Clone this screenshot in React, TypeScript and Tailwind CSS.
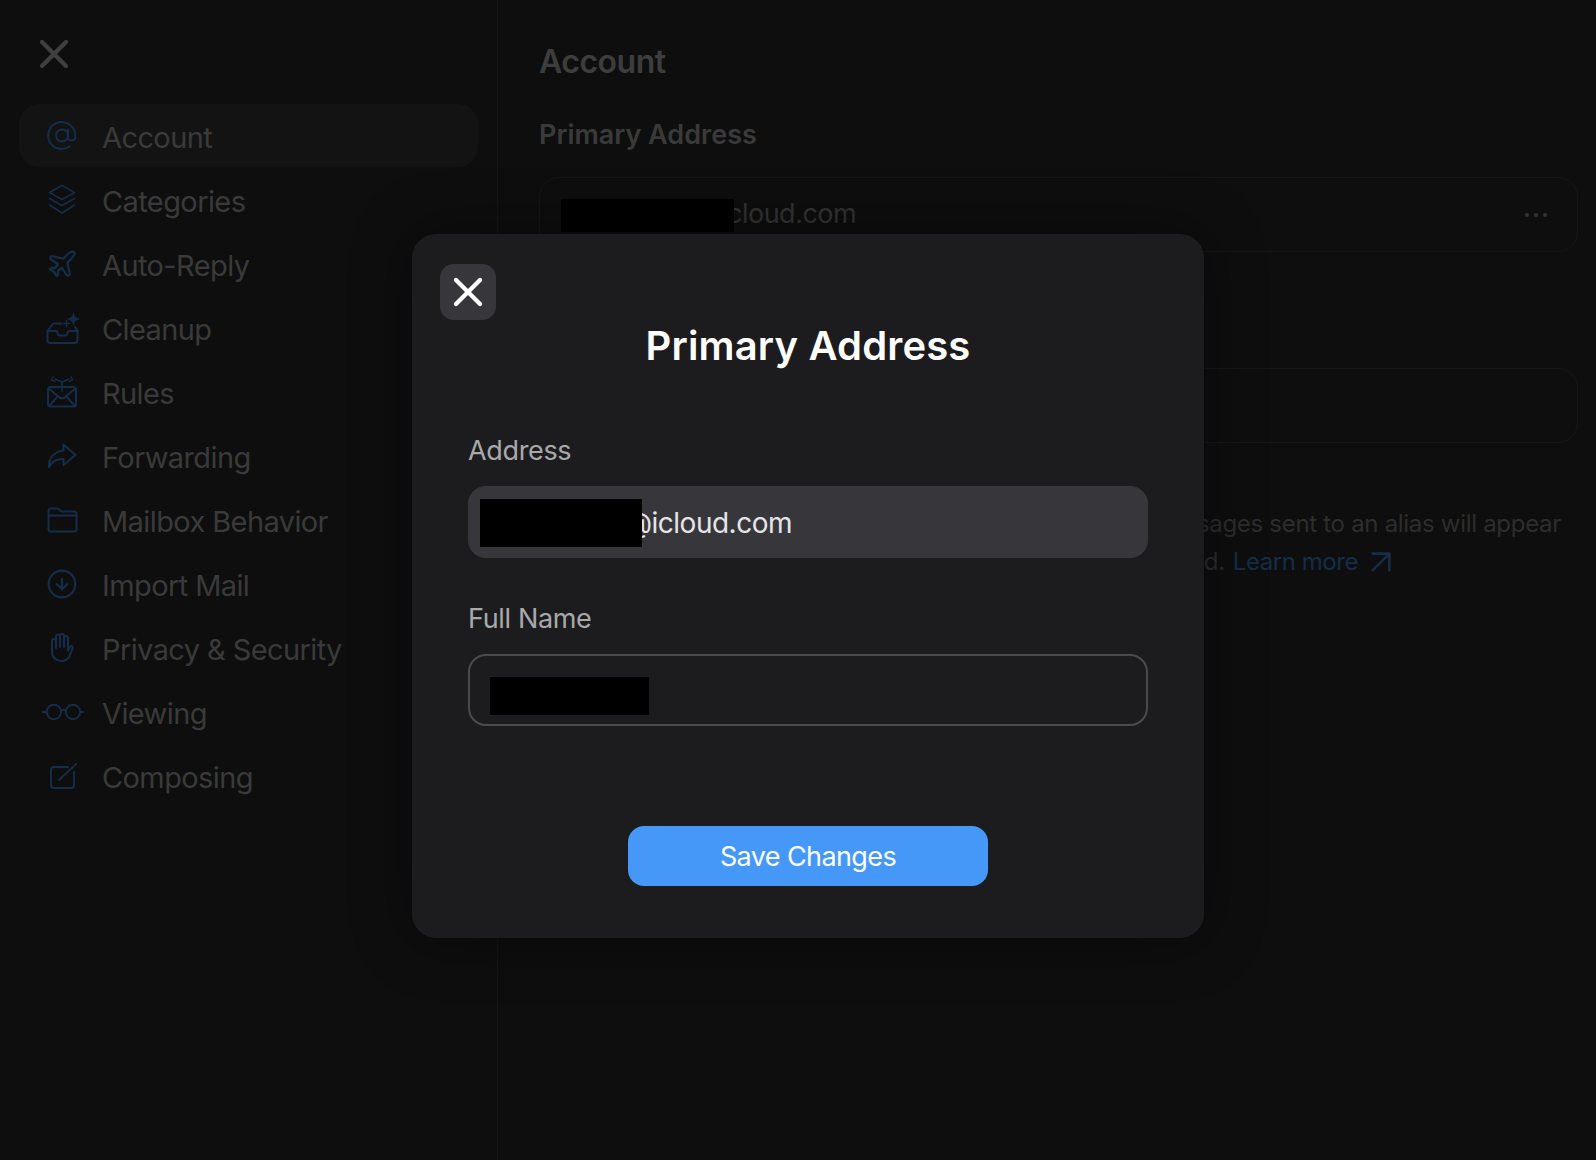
import React from 'react';
import { X, Plane, CircleArrowDown, ArrowUpRight } from 'lucide-react';

const iconProps = {
  fill: 'none',
  stroke: 'currentColor',
  strokeWidth: 2,
  strokeLinecap: 'round' as const,
  strokeLinejoin: 'round' as const,
};

const AtIcon = () => (
  <svg width="30" height="30" viewBox="0 0 30 30" {...iconProps}>
    <circle cx="15" cy="14.5" r="6" />
    <path d="M21 8.5v7.5a3.6 3.6 0 0 0 7.2 0v-1.5a13.5 13.5 0 1 0-5.6 11" />
  </svg>
);

const LayersIcon = () => (
  <svg width="30" height="31" viewBox="0 0 30 31" {...iconProps} strokeWidth={1.6}>
    <path d="M15 1.5 27.5 8.5 15 15.5 2.5 8.5Z" />
    <path d="M2.5 14.5 15 21.5 27.5 14.5" />
    <path d="M2.5 21 15 29 27.5 21" />
  </svg>
);

const TrayIcon = () => (
  <svg width="36" height="36" viewBox="0 0 36 36" {...iconProps}>
    <path d="M3.5 21v9a3 3 0 0 0 3 3h24a3 3 0 0 0 3-3v-9" />
    <path d="M3.5 21 8 15a3 3 0 0 1 2.5-1.5H17M33.5 21 31 17" />
    <path d="M3.5 21h8a2 2 0 0 1 2 2 2.5 2.5 0 0 0 2.5 2.5h5a2.5 2.5 0 0 0 2.5-2.5 2 2 0 0 1 2-2h8.5" />
    <path d="M29.5 3c.5 3.5 2 5 6 6-4 1-5.5 2.5-6 6-.5-3.5-2-5-6-6 4-1 5.5-2.5 6-6Z" fill="currentColor" strokeWidth={0.6} />
    <path d="M22.5 10.5v6M19.5 13.5h6" strokeWidth={1.4} />
  </svg>
);

const EnvelopeArrowsIcon = () => (
  <svg width="32" height="32" viewBox="0 0 32 32" {...iconProps}>
    <rect x="2" y="11" width="28" height="19.5" rx="2.5" />
    <path d="M2.5 12.5 13 21a4 4 0 0 0 6 0l10.5-8.5" />
    <path d="M3 30 12 20M29 30 20 20" />
    <path d="M16 15V6M16 6 9 3M16 6l7-3" strokeWidth={1.6} />
    <path d="M7 1 5.5 4 9 5.5M25 1l1.5 3L23 5.5" strokeWidth={1.4} />
  </svg>
);

const ForwardIcon = () => (
  <svg width="30" height="26" viewBox="0 0 30 26" {...iconProps}>
    <path d="M16.5 1.5 28.5 12 16.5 22v-6C9.5 15.5 5 18 2 24c-.5-9 5-15 14.5-16.5Z" />
  </svg>
);

const FolderIcon = () => (
  <svg width="31" height="26" viewBox="0 0 31 26" {...iconProps}>
    <path d="M1.5 5V22a2.5 2.5 0 0 0 2.5 2.5h23a2.5 2.5 0 0 0 2.5-2.5V7a2.5 2.5 0 0 0-2.5-2.5H14.5L11.5 2a2 2 0 0 0-1.5-.5H4A2.5 2.5 0 0 0 1.5 4V8.5h28" />
  </svg>
);

const HandIcon = () => (
  <svg width="25" height="30" viewBox="0 0 25 30" {...iconProps}>
    <path d="M2 8a2 2 0 0 1 4 0v7M6 15V3.5a2 2 0 0 1 4 0V14M10 14V3a2 2 0 0 1 4 0v11M14 14V5a2 2 0 0 1 4 0v12.5l2-3.5c1-1.7 3.5-.5 2.7 1.2L19.5 23c-1.5 3-4 5-8 5C6 28 2 24.5 2 19V8" />
  </svg>
);

const GlassesIcon = () => (
  <svg width="46" height="20" viewBox="0 0 46 20" {...iconProps}>
    <circle cx="14.5" cy="10" r="7.5" />
    <circle cx="34.5" cy="10" r="7.5" />
    <path d="M22 9c1.5-1.5 3.5-1.5 5 0M7 10H3M42 10h3" />
  </svg>
);

const ComposeIcon = () => (
  <svg width="32" height="28" viewBox="0 0 32 28" {...iconProps}>
    <path d="M22 5H8a3 3 0 0 0-3 3v15a3 3 0 0 0 3 3h17a3 3 0 0 0 3-3V10" />
    <path d="M13 18 27 5M28.5 3.5 30 2" />
  </svg>
);

const navItems = [
  { label: 'Account', icon: <AtIcon /> },
  { label: 'Categories', icon: <LayersIcon /> },
  { label: 'Auto-Reply', icon: <Plane size={32} strokeWidth={1.7} /> },
  { label: 'Cleanup', icon: <TrayIcon /> },
  { label: 'Rules', icon: <EnvelopeArrowsIcon /> },
  { label: 'Forwarding', icon: <ForwardIcon /> },
  { label: 'Mailbox Behavior', icon: <FolderIcon /> },
  { label: 'Import Mail', icon: <CircleArrowDown size={32} strokeWidth={1.6} /> },
  { label: 'Privacy & Security', icon: <HandIcon /> },
  { label: 'Viewing', icon: <GlassesIcon /> },
  { label: 'Composing', icon: <ComposeIcon /> },
];

const Sidebar = () => (
  <aside className="w-[498px] shrink-0 border-r border-[#151515] px-[19px] pt-[40px]">
    <div className="pl-[21px]">
      <X size={48} strokeWidth={2.1} className="-m-[10px] text-[#3f3f3f]" />
    </div>
    <nav className="mt-[36px] flex flex-col gap-px">
      {navItems.map((item, i) => (
        <div
          key={item.label}
          className={`flex h-[63px] w-[459px] items-center gap-[18px] rounded-[20px] pl-[21px] ${i === 0 ? 'bg-[#131313]' : ''}`}
        >
          <span className="flex w-[44px] justify-center text-[#152d49]">{item.icon}</span>
          <span className="mt-[4px] text-[29px] tracking-[-0.6px] text-[#3a3a3a]">{item.label}</span>
        </div>
      ))}
    </nav>
  </aside>
);

const Main = () => (
  <main className="flex-1 pl-[41px] pr-[18px] pt-[41px]">
    <h1 className="text-[32px] leading-[42px] font-semibold tracking-[-0.5px] text-[#3d3d3d]">Account</h1>
    <h2 className="mt-[34px] text-[27px] leading-[36px] font-semibold text-[#3a3a3a]">Primary Address</h2>
    <div className="relative mt-[24px] flex h-[75px] items-center justify-between rounded-[20px] border border-[#161616] pl-[187px] pr-[30px]">
      <span className="text-[27px] tracking-[-0.5px] text-[#333333]">cloud.com</span>
      <span className="absolute left-[21px] top-[21px] h-[33px] w-[173px] bg-black" />
      <div className="flex gap-[5px]">
        <span className="h-[4px] w-[4px] rounded-full bg-[#333333]" />
        <span className="h-[4px] w-[4px] rounded-full bg-[#333333]" />
        <span className="h-[4px] w-[4px] rounded-full bg-[#333333]" />
      </div>
    </div>
    <div className="mt-[116px] h-[75px] rounded-[20px] border border-[#161616]" />
    <div className="mt-[62px] text-[24px] leading-[38px] tracking-[-0.3px] text-[#2d2d2d]">
      <div className="flex justify-end pr-[17px]">Messages sent to an alias will appear</div>
      <div className="flex items-center justify-end pr-[187px]">
        <span>received.</span>
        <span className="ml-[8px] tracking-[-0.45px] text-[#152d49]">Learn more</span>
        <ArrowUpRight size={40} strokeWidth={1.6} className="-my-[10px] ml-[3px] -mr-[10px] text-[#152d49]" />
      </div>
    </div>
  </main>
);

const Modal = () => (
  <div className="absolute left-[412px] top-[234px] h-[704px] w-[792px] rounded-[24px] bg-[#1c1c1e] pl-[56px] pr-[56px] pt-[30px] shadow-[0_0_60px_rgba(0,0,0,0.45)]">
    <button className="-ml-[28px] flex h-[56px] w-[56px] items-center justify-center rounded-[14px] bg-[#37373b] text-white">
      <X size={48} strokeWidth={2.1} className="shrink-0" />
    </button>
    <h2 className="mt-[2px] text-center text-[40px] leading-[48px] font-semibold tracking-[0.15px] text-white">Primary Address</h2>
    <label className="mt-[63px] block text-[27px] leading-[36px] tracking-[-0.35px] text-[#a9a9ab]">Address</label>
    <div className="relative mt-[17px] flex h-[72px] items-center overflow-hidden rounded-[18px] bg-[#37373b] pl-[157px] text-[28px] tracking-[-0.5px] text-[#e5e5e7]">
      <span className="mt-[2px]">@icloud.com</span>
      <span className="absolute left-[12px] top-[13px] h-[48px] w-[162px] bg-black" />
    </div>
    <label className="mt-[43px] block text-[27px] leading-[36px] tracking-[-0.35px] text-[#a9a9ab]">Full Name</label>
    <div className="mt-[17px] flex h-[72px] items-center rounded-[18px] border-2 border-[#4b4b4d] pl-[20px]">
      <span className="mt-[12px] h-[38px] w-[159px] bg-black" />
    </div>
    <div className="mt-[100px] flex justify-center">
      <button className="h-[60px] w-[360px] rounded-[16px] bg-[#4598f8] pt-[2px] text-[27px] tracking-[-0.6px] text-white">Save Changes</button>
    </div>
  </div>
);

export default function App() {
  return (
    <div className="relative flex h-[1160px] w-[1596px] overflow-hidden bg-[#0e0e0e] font-['Inter',sans-serif]">
      <Sidebar />
      <Main />
      <Modal />
    </div>
  );
}
